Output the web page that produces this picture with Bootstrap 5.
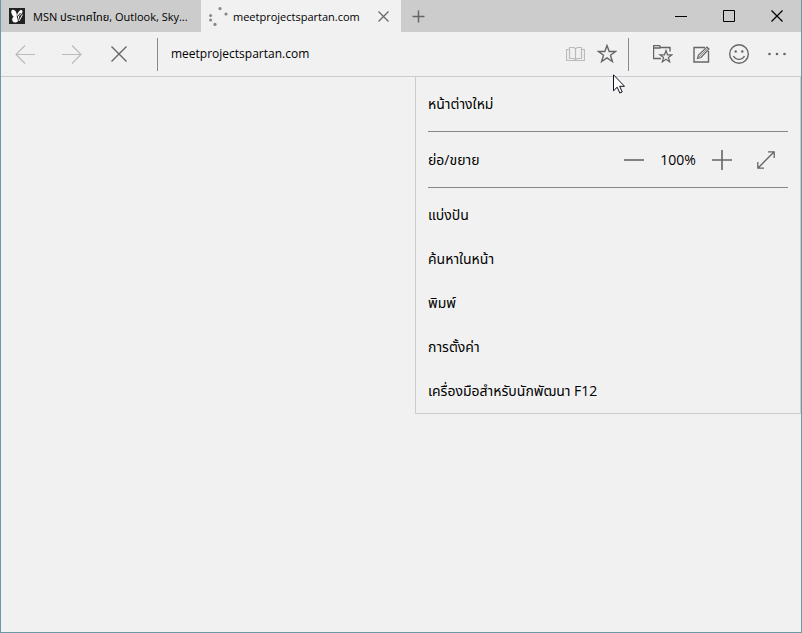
<!DOCTYPE html>
<html lang="th">
<head>
<meta charset="utf-8">
<meta name="viewport" content="width=device-width, initial-scale=1">
<title>meetprojectspartan.com</title>
<link href="https://cdn.jsdelivr.net/npm/bootstrap@5.3.0/dist/css/bootstrap.min.css" rel="stylesheet">
<style>
body { font-family: "Open Sans", "Noto Sans", "Noto Sans Thai", sans-serif; font-size: 14px; line-height: 20px; color: #000; background: #f1f1f1; }
svg { display: block; fill: none; stroke: #666; stroke-width: 1.2; }
.browser { border: 1px solid #6d99a5; border-top: 0; }
.titlebar { height: 32px; background: #ccc; }
.tab { width: 200px; min-width: 0; }
.tab-current { background: #f1f1f1; }
.tab-title { font-size: 11px; color: #000; text-decoration: none; padding-top: 2px; }
.plain { padding: 0; border: 0; background: transparent; display: flex; align-items: center; justify-content: center; color: inherit; flex-shrink: 0; }
.tab-close { width: 36px; }
.tab-new { width: 34px; }
.win-btn { width: 48px; }
.win-btn svg { stroke: #000; stroke-width: 1; }
.toolbar { height: 45px; border-bottom: 1px solid #ccc; padding-right: 5px; }
.nav-btn { width: 47px; }
.nav-btn:disabled svg, .dim svg { stroke: #bbb; }
.page-btn { width: 31px; }
.tool-btn { width: 38px; }
.divider { width: 1px; height: 33px; background: #888; margin-left: 15px; }
.tool-divider { margin: 0 15px 0 6px; }
.address { border: 0; background: transparent; padding: 0 0 0 13px; min-width: 0; outline: 0; color: #000; font-size: 12px; }
.menu-panel { width: 386px; max-width: 100%; border: 1px solid #ccc; border-top: 0; }
.menu-line { border-color: #888 !important; }
.menu-item { height: 44px; justify-content: flex-start; }
.menu-first { height: 54px; }
.menu-zoom { height: 57px; }
.menu-rest { padding-top: 5px; }
.zoom-btn { width: 44px; }
.pointer { position: absolute; left: 612px; top: 74px; pointer-events: none; stroke-width: 1; }
</style>
<script src="https://cdn.jsdelivr.net/npm/bootstrap@5.3.0/dist/js/bootstrap.bundle.min.js" defer></script>
</head>
<body>
<div class="browser min-vh-100 d-flex flex-column position-relative">
  <header class="titlebar d-flex align-items-stretch">
    <div class="tab d-flex align-items-center ps-2 pe-2 gap-2">
      <svg class="flex-shrink-0" width="16" height="16" viewBox="0 0 16 16"><path d="M0 0h16v16H0z" fill="#222" stroke="none"/><path d="M3 2C5.500 1 7.600 3.500 8 7.500 8.600 4.500 11 1.500 12.500 2c2 1 1 4-2.500 6 .5 3-.5 6-3.500 6.500C4 14.700 3.200 13 3.200 11.500c0-1.500.8-2.200 1.500-2.800C2.500 7 1.500 3 3 2z" fill="#fff" stroke="none"/><path d="M8 7.500 9.500 13M8.500 8.500l3-3.500M11.500 9l2-2.500" stroke="#222" stroke-width="1"/><path d="M10 13l3.500-6.500" stroke="#fff" stroke-width="1"/></svg>
      <a class="tab-title text-truncate" href="#">MSN ประเทศไทย, Outlook, Sky...</a>
    </div>
    <div class="tab tab-current d-flex align-items-stretch ps-2">
      <svg class="flex-shrink-0 align-self-center me-1" width="20" height="20" viewBox="0 0 20 20"><g fill="#888" stroke="none"><circle cx="11" cy="2.600" r="1.600"/><circle cx="17" cy="8" r="1.600"/><circle cx="1.600" cy="9.500" r="1.500"/><circle cx="1.600" cy="14" r="1.500"/><circle cx="6" cy="18.400" r="1.600"/></g></svg>
      <a class="tab-title text-truncate flex-grow-1 align-self-center" href="#">meetprojectspartan.com</a>
      <button class="plain tab-close" aria-label="ปิดแท็บ"><svg width="11" height="11"><path d="M.5.5l10 10M10.500.5l-10 10"/></svg></button>
    </div>
    <button class="plain tab-new" aria-label="แท็บใหม่"><svg width="13" height="13"><path d="M6.500.5v12M.5 6.500h12" stroke-width="1.500"/></svg></button>
    <div class="d-flex ms-auto">
      <button class="plain win-btn" aria-label="ย่อ"><svg width="12" height="12"><path d="M0 6.500h12"/></svg></button>
      <button class="plain win-btn" aria-label="ขยาย"><svg width="12" height="12"><path d="M.5.5h11v11H.5z"/></svg></button>
      <button class="plain win-btn" aria-label="ปิด"><svg width="12" height="12"><path d="M.5.5l11 11M11.500.5l-11 11" stroke-width="1.300"/></svg></button>
    </div>
  </header>

  <nav class="toolbar d-flex align-items-center">
    <button class="plain nav-btn h-100" disabled aria-label="ย้อนกลับ"><svg width="20" height="20"><path d="M20 10.500H1M10 1.500l-9 9 9 9"/></svg></button>
    <button class="plain nav-btn h-100" disabled aria-label="ไปข้างหน้า"><svg width="20" height="20"><path d="M0 10.500h19M10 1.500l9 9-9 9"/></svg></button>
    <button class="plain nav-btn h-100" aria-label="หยุด"><svg width="16" height="16"><path d="M.5.5l15 15M15.500.5l-15 15" stroke-width="1.400"/></svg></button>
    <span class="divider"></span>
    <input class="address flex-grow-1" type="text" value="meetprojectspartan.com" aria-label="ที่อยู่">
    <button class="plain page-btn dim h-100" aria-label="มุมมองการอ่าน"><svg width="19" height="16"><path d="M9.500 2.500v11M3.500 1.500h4l2 1 2-1h4v11h-4l-2 1-2-1h-4zM3.500 3.500h-3v11h18v-11h-3"/></svg></button>
    <button class="plain page-btn h-100" aria-label="เพิ่มรายการโปรด"><svg width="20" height="20"><path d="M10 1.500l2.200 6h6.300l-5 3.800 1.900 6.200-5.400-3.700-5.400 3.700 1.900-6.200-5-3.800h6.300z" stroke-width="1.400"/></svg></button>
    <span class="divider tool-divider"></span>
    <button class="plain tool-btn h-100" aria-label="ฮับ"><svg width="20" height="18" viewBox="0 0 20 18"><path d="M8 13.500H.5V.5h6l1 2h9.500v4M.5 3h7" stroke-width="1.400"/><path d="M13 5.500l1.500 4.300H19l-3.600 2.600 1.300 4.500-3.700-2.600-3.700 2.600 1.300-4.500L7 9.800h4.500z"/></svg></button>
    <button class="plain tool-btn h-100" aria-label="จดบันทึกบนเว็บ"><svg width="17" height="17"><path d="M12 1.500H1v14.500h14.500V5" stroke-width="1.400"/><path d="M4.500 12.500l1-3.500L14 1l2 2-8 8.500z"/><path d="M6 11 14.800 2.300" stroke-width=".7"/></svg></button>
    <button class="plain tool-btn h-100" aria-label="ส่งคำติชม"><svg width="20" height="20"><circle cx="10" cy="10" r="9.300" stroke-width="1.400"/><circle cx="6.700" cy="7.500" r="1.200" fill="#666" stroke="none"/><circle cx="13.300" cy="7.500" r="1.200" fill="#666" stroke="none"/><path d="M4.500 12c2.500 4.500 8.500 4.500 11 0" stroke-width="1.400"/></svg></button>
    <button class="plain tool-btn h-100" aria-label="การกระทำเพิ่มเติม" aria-expanded="true"><svg width="18" height="4"><g fill="#666" stroke="none"><circle cx="1.500" cy="2" r="1.300"/><circle cx="9" cy="2" r="1.300"/><circle cx="16.500" cy="2" r="1.300"/></g></svg></button>
  </nav>

  <main class="flex-grow-1 d-flex justify-content-end align-items-start">
    <div class="menu-panel px-1">
      <div class="px-2">
        <button class="plain menu-item menu-first w-100">หน้าต่างใหม่</button>
        <div class="menu-zoom menu-line d-flex align-items-stretch border-top border-bottom">
          <span class="align-self-center me-auto">ย่อ/ขยาย</span>
          <button class="plain zoom-btn" aria-label="ย่อ"><svg width="20" height="20"><path d="M0 10h20" stroke-width="1.600"/></svg></button>
          <span class="zoom-btn align-self-center text-center">100%</span>
          <button class="plain zoom-btn" aria-label="ขยาย"><svg width="20" height="20"><path d="M0 10h20M10 0v20" stroke-width="1.600"/></svg></button>
          <button class="plain zoom-btn" aria-label="เต็มหน้าจอ"><svg width="18" height="18"><path d="M.8 17.200 17.200.8M11 .8h6.200V7M.8 11v6.200H7" stroke-width="1.300"/></svg></button>
        </div>
        <div class="menu-rest">
          <button class="plain menu-item w-100">แบ่งปัน</button>
          <button class="plain menu-item w-100">ค้นหาในหน้า</button>
          <button class="plain menu-item w-100">พิมพ์</button>
          <button class="plain menu-item w-100">การตั้งค่า</button>
          <button class="plain menu-item w-100">เครื่องมือสำหรับนักพัฒนา F12</button>
        </div>
      </div>
    </div>
  </main>

  <svg class="pointer" width="12" height="20" viewBox="0 0 12 20"><path d="M.5.8v16l3.700-3.600 2.600 5.800 2.400-1-2.500-5.700h4.800z" fill="#fff" stroke="#112"/></svg>
</div>
</body>
</html>
